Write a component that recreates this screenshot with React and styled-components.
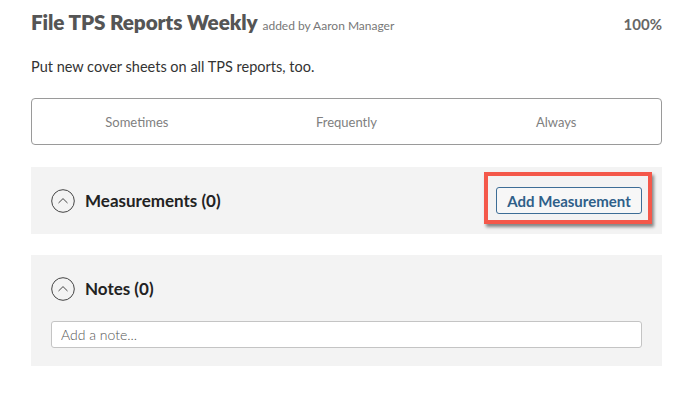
import React from "react";
import styled, { createGlobalStyle } from "styled-components";

const Global = createGlobalStyle`
  html, body { margin: 0; padding: 0; background: #fff; }
  body { font-family: Lato, "Noto Sans", "Liberation Sans", sans-serif; color: #333; }
  * { box-sizing: border-box; }
`;

const Page = styled.div`
  padding: 10px 29px 0 31px;
  display: flex;
  flex-direction: column;
`;

const Header = styled.div`
  display: flex;
  justify-content: space-between;
  align-items: baseline;
`;

const TitleWrap = styled.div`
  display: flex;
  align-items: baseline;
  gap: 5px;
`;

const Title = styled.h1`
  margin: 0;
  font-size: 20.7px;
  font-weight: 800;
  color: #555;
  letter-spacing: -0.1px;
`;

const Byline = styled.span`
  font-size: 12px;
  color: #777;
`;

const Percent = styled.span`
  font-size: 15px;
  font-weight: 700;
  color: #666;
`;

const Description = styled.p`
  margin: 24px 0 0;
  font-size: 14.5px;
  color: #333;
`;

const Segments = styled.div`
  margin-top: 23px;
  height: 47px;
  border: 1px solid #9a9a9a;
  border-radius: 4px;
  display: grid;
  grid-template-columns: repeat(3, 1fr);
  align-items: center;
`;

const Segment = styled.div`
  text-align: center;
  font-size: 13px;
  color: #808080;
  font-weight: 400;
`;

const Panel = styled.section`
  margin-top: ${(p) => p.$gap}px;
  background: #f3f3f3;
  padding: 20px 20px ${(p) => p.$bottom}px;
  display: flex;
  flex-direction: column;
  gap: 19px;
`;

const PanelHead = styled.div`
  display: flex;
  align-items: center;
  justify-content: space-between;
  min-height: 27px;
`;

const HeadLeft = styled.div`
  display: flex;
  align-items: center;
  gap: 10px;
`;

const PanelTitle = styled.h2`
  margin: 0;
  font-size: 17px;
  font-weight: 700;
  color: #222;
`;

const ButtonWrap = styled.div`
  position: relative;
  display: flex;
  &::after {
    content: "";
    position: absolute;
    left: -12px;
    top: -15px;
    right: -10px;
    bottom: -10px;
    border: 4px solid #f4584a;
    box-shadow: 2px 3px 3px rgba(0, 0, 0, 0.45);
    pointer-events: none;
  }
`;

const Button = styled.button`
  width: 146px;
  height: 27px;
  background: #f7f7f7;
  border: 1px solid #3d6d96;
  border-radius: 3px;
  color: #2f5f89;
  font-family: inherit;
  font-size: 15px;
  font-weight: 700;
  padding: 0;
  cursor: pointer;
`;

const NoteInput = styled.input`
  height: 27px;
  width: 100%;
  border: 1px solid #c4c4c4;
  border-radius: 3px;
  background: #fff;
  padding: 0 9px;
  font-family: inherit;
  font-size: 14px;
  color: #333;
  &::placeholder { color: #555; font-weight: 300; }
`;

const ChevronCircle = () => (
  <svg width="24" height="24" viewBox="0 0 24 24" style={{ display: "block", flex: "none" }}>
    <circle cx="12" cy="12" r="11.3" fill="none" stroke="#444" strokeWidth="1" />
    <path d="M7.5 14 L12 9.6 L16.5 14" fill="none" stroke="#444" strokeWidth="1" />
  </svg>
);

export default function App() {
  return (
    <>
      <Global />
      <Page>
        <Header>
          <TitleWrap>
            <Title>File TPS Reports Weekly</Title>
            <Byline>added by Aaron Manager</Byline>
          </TitleWrap>
          <Percent>100%</Percent>
        </Header>
        <Description>Put new cover sheets on all TPS reports, too.</Description>
        <Segments>
          <Segment>Sometimes</Segment>
          <Segment>Frequently</Segment>
          <Segment>Always</Segment>
        </Segments>
        <Panel $gap={22} $bottom={20}>
          <PanelHead>
            <HeadLeft>
              <ChevronCircle />
              <PanelTitle>Measurements (0)</PanelTitle>
            </HeadLeft>
            <ButtonWrap>
              <Button>Add Measurement</Button>
            </ButtonWrap>
          </PanelHead>
        </Panel>
        <Panel $gap={21} $bottom={18}>
          <PanelHead>
            <HeadLeft>
              <ChevronCircle />
              <PanelTitle>Notes (0)</PanelTitle>
            </HeadLeft>
          </PanelHead>
          <NoteInput placeholder="Add a note..." />
        </Panel>
      </Page>
    </>
  );
}
